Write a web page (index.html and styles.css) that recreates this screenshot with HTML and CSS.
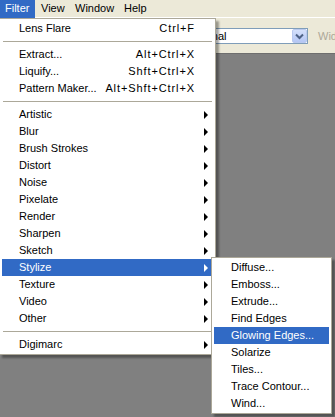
FILE: index.html
```html
<!DOCTYPE html>
<html lang="en">
<head>
  <meta charset="UTF-8">
  <meta name="viewport" content="width=device-width, initial-scale=1.0">
  <title>Filter menu</title>
  <link rel="stylesheet" href="styles.css">
</head>
<body>
  <div class="menubar">
    <div class="menubar-item filter active">Filter</div>
    <div class="menubar-item view">View</div>
    <div class="menubar-item window">Window</div>
    <div class="menubar-item help">Help</div>
  </div>

  <div class="options">
    <div class="select">
      <span class="select-text">Normal</span>
      <span class="select-btn">
        <svg width="9" height="7" viewBox="0 0 9 7">
          <path d="M1 1.5 L4.5 5 L8 1.5" fill="none" stroke="#4d6185" stroke-width="2"/>
        </svg>
      </span>
    </div>
    <span class="options-label">Width:</span>
  </div>

  <div class="workspace"></div>

  <div class="menu main-menu">
    <div class="row"><span class="label">Lens Flare</span><span class="key">Ctrl+F</span><span class="sub"></span></div>
    <div class="sep"></div>
    <div class="row"><span class="label">Extract...</span><span class="key">Alt+Ctrl+X</span><span class="sub"></span></div>
    <div class="row"><span class="label">Liquify...</span><span class="key">Shft+Ctrl+X</span><span class="sub"></span></div>
    <div class="row"><span class="label">Pattern Maker...</span><span class="key">Alt+Shft+Ctrl+X</span><span class="sub"></span></div>
    <div class="sep"></div>
    <div class="row"><span class="label">Artistic</span><span class="sub arrow"></span></div>
    <div class="row"><span class="label">Blur</span><span class="sub arrow"></span></div>
    <div class="row"><span class="label">Brush Strokes</span><span class="sub arrow"></span></div>
    <div class="row"><span class="label">Distort</span><span class="sub arrow"></span></div>
    <div class="row"><span class="label">Noise</span><span class="sub arrow"></span></div>
    <div class="row"><span class="label">Pixelate</span><span class="sub arrow"></span></div>
    <div class="row"><span class="label">Render</span><span class="sub arrow"></span></div>
    <div class="row"><span class="label">Sharpen</span><span class="sub arrow"></span></div>
    <div class="row"><span class="label">Sketch</span><span class="sub arrow"></span></div>
    <div class="row selected"><span class="label">Stylize</span><span class="sub arrow"></span></div>
    <div class="row"><span class="label">Texture</span><span class="sub arrow"></span></div>
    <div class="row"><span class="label">Video</span><span class="sub arrow"></span></div>
    <div class="row"><span class="label">Other</span><span class="sub arrow"></span></div>
    <div class="sep"></div>
    <div class="row"><span class="label">Digimarc</span><span class="sub arrow"></span></div>
  </div>

  <div class="menu sub-menu">
    <div class="row"><span class="label">Diffuse...</span></div>
    <div class="row"><span class="label">Emboss...</span></div>
    <div class="row"><span class="label">Extrude...</span></div>
    <div class="row"><span class="label">Find Edges</span></div>
    <div class="row selected"><span class="label">Glowing Edges...</span></div>
    <div class="row"><span class="label">Solarize</span></div>
    <div class="row"><span class="label">Tiles...</span></div>
    <div class="row"><span class="label">Trace Contour...</span></div>
    <div class="row"><span class="label">Wind...</span></div>
  </div>
</body>
</html>
```

FILE: styles.css
```css
body {
  margin: 0;
  width: 335px;
  height: 417px;
  overflow: hidden;
  position: relative;
  background: #808080;
  font-family: "Liberation Sans", Arial, sans-serif;
  font-size: 11px;
  color: #000;
  display: flex;
  flex-direction: column;
}

.menubar {
  display: flex;
  height: 17px;
  background: #ece9d8;
  border-bottom: 1px solid #fff;
}

.menubar-item {
  box-sizing: border-box;
  padding-left: 6px;
  line-height: 17px;
  flex-shrink: 0;
}

.menubar-item.filter { width: 35px; padding-left: 5px; }
.menubar-item.view { width: 34px; }
.menubar-item.window { width: 49px; }
.menubar-item.help { width: 30px; }

.menubar-item.active {
  background: #316ac5;
  color: #fff;
  height: 18px;
}

.options {
  height: 35px;
  background: #ece9d8;
  display: flex;
  align-items: center;
  white-space: nowrap;
  overflow: hidden;
}

.select {
  flex-shrink: 0;
  margin-left: 186px;
  width: 122px;
  height: 16px;
  box-sizing: border-box;
  border: 1px solid #7f9db9;
  background: #fff;
  display: flex;
  align-items: center;
  justify-content: space-between;
  margin-top: 1px;
}

.select-text {
  padding-left: 4px;
  line-height: 14px;
}

.select-btn {
  width: 15px;
  height: 14px;
  box-sizing: border-box;
  border: 1px solid #b9c9ef;
  border-radius: 2px;
  background: linear-gradient(#d4e0fb, #b4c6f4);
  display: flex;
  align-items: center;
  justify-content: center;
}

.options-label {
  flex-shrink: 0;
  margin-left: 10px;
  color: #aca899;
}

.workspace {
  flex: 1;
  background: #808080;
  border-top: 1px solid #6e6e6e;
}

.menu {
  position: absolute;
  box-sizing: border-box;
  background: #fff;
  border: 1px solid #aca899;
  padding: 1px 2px;
  box-shadow: 3px 3px 2px rgba(0, 0, 0, 0.35);
}

.main-menu {
  left: -1px;
  top: 18px;
  width: 217px;
}

.sub-menu {
  left: 211px;
  top: 257px;
  width: 121px;
}

.row {
  display: flex;
  height: 17px;
  line-height: 17px;
  white-space: nowrap;
}

.row .label {
  flex: 1;
  padding-left: 17px;
}

.row .key {
  letter-spacing: 0.9px;
}

.row .sub {
  width: 18px;
  display: flex;
  align-items: center;
}

.row .arrow::before {
  content: '';
  margin-left: 9px;
  border-left: 4px solid #000;
  border-top: 4px solid transparent;
  border-bottom: 4px solid transparent;
}

.row.selected {
  background: #316ac5;
  color: #fff;
}

.row.selected .arrow::before {
  border-left-color: #fff;
}

.sep {
  height: 9px;
  margin: 0 1px;
  display: flex;
  align-items: center;
}

.sep::before {
  content: '';
  flex: 1;
  height: 1px;
  background: #aca899;
}
```
